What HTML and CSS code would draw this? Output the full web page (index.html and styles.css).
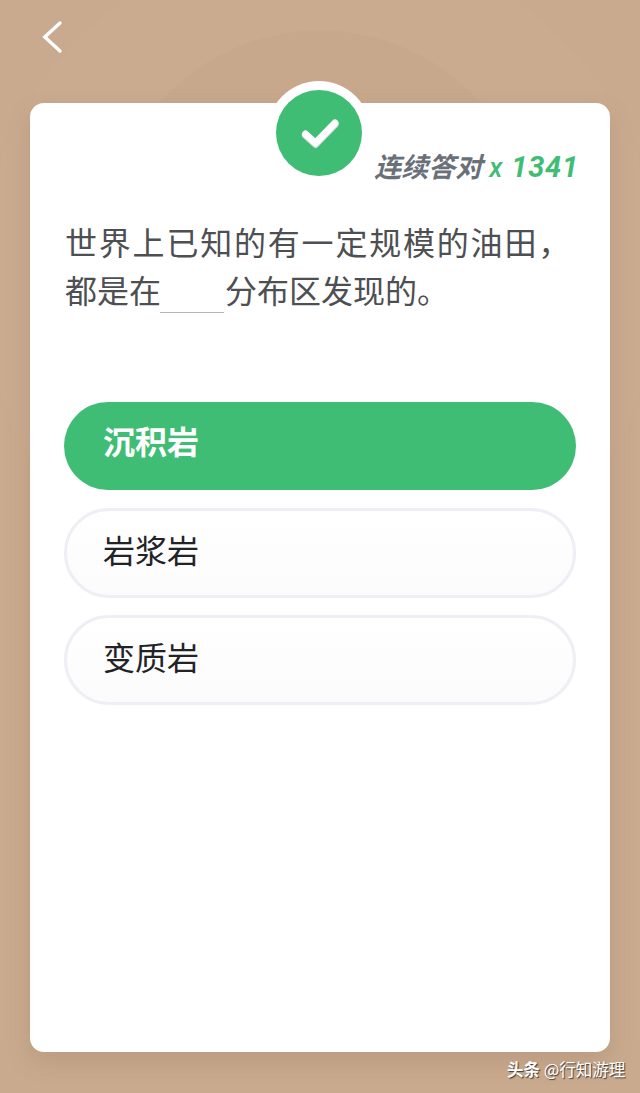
FILE: index.html
```html
<!DOCTYPE html>
<html lang="zh-CN">
<head>
<meta charset="utf-8">
<title>连续答对</title>
<link rel="stylesheet" href="styles.css">
</head>
<body>
<div class="page">
  <header class="topbar">
    <svg class="back" width="24" height="36" viewBox="0 0 24 36" aria-hidden="true"><path d="M19 4 L3.800 18 L19 32" fill="none" stroke="#ffffff" stroke-width="3.400" stroke-linecap="round" stroke-linejoin="miter"/></svg>
  </header>
  <main class="card">
    <div class="badge">
      <svg width="86" height="86" viewBox="0 0 86 86" aria-hidden="true">
        <circle cx="43" cy="43" r="43" fill="#3fbd75"/>
        <path d="M29.500 44 L39.500 53 L59 33" fill="none" stroke="#cfd8d2" stroke-width="7" stroke-linecap="round" stroke-linejoin="round" transform="translate(0 1.500)"/>
        <path d="M29.500 44 L39.500 53 L59 33" fill="none" stroke="#ffffff" stroke-width="7" stroke-linecap="round" stroke-linejoin="round"/>
      </svg>
    </div>
    <div class="streak"><span class="streak-label">连续答对</span> <span class="streak-count"><span class="streak-x">x</span> 1341</span></div>
    <div class="question">
      <p class="question-line question-line-wide">世界上已知的有一定规模的油田，</p>
      <p class="question-line">都是在<span class="blank"></span>分布区发现的。</p>
    </div>
    <div class="options">
      <div class="option option-correct">沉积岩</div>
      <div class="option">岩浆岩</div>
      <div class="option">变质岩</div>
    </div>
  </main>
  <footer class="watermark"><b>头条</b> @行知游理</footer>
</div>
</body>
</html>
```
FILE: styles.css
```css
* { box-sizing: border-box; }
html, body { margin: 0; padding: 0; }
body { font-family: "Noto Sans CJK SC", "Roboto", sans-serif; }
.page {
  position: relative;
  width: 640px;
  height: 1093px;
  overflow: hidden;
  padding: 0 30px;
  background-color: #c9aa8e;
  background-image:
    radial-gradient(circle 215px at 320px 245px, #c7a88c 0, #c7a88c 99.6%, rgba(199,168,140,0) 100%),
    radial-gradient(circle 340px at 320px 278px, #caab90 0, #caab90 99.7%, rgba(202,171,144,0) 100%);
  background-repeat: no-repeat;
}
.topbar { height: 103px; padding: 19px 0 0 11px; }
.back { display: block; }
.card {
  position: relative;
  height: 949px;
  background: #ffffff;
  border-radius: 14px;
  box-shadow: 0 10px 24px rgba(120, 90, 60, 0.18);
  padding: 45px 34px 0 34px;
}
.badge {
  position: absolute;
  left: 237px;
  top: -22px;
  width: 104px;
  height: 104px;
  border-radius: 50%;
  background: #ffffff;
  display: flex;
  align-items: center;
  justify-content: center;
}
.badge svg { display: block; }
.streak {
  display: flex;
  justify-content: flex-end;
  align-items: baseline;
  gap: 7px;
  height: 36px;
  margin-right: -3px;
  font-style: italic;
  font-weight: 700;
  line-height: 36px;
}
.streak-label { font-size: 27px; color: #6a7078; }
.streak-count { font-family: "Roboto", sans-serif; font-size: 29px; color: #3fbd75; letter-spacing: 0.800px; }
.streak-x { font-size: 27px; font-weight: 500; }
.question {
  margin: 33px 0 0 1px;
  font-size: 32px;
  line-height: 48px;
  color: #4d4f53;
  white-space: nowrap;
}
.question-line { margin: 0; }
.question-line-wide { letter-spacing: 1.800px; }
.blank {
  display: inline-block;
  width: 64px;
  height: 34px;
  vertical-align: -10px;
  margin: 0 1px 0 -1px;
  border-bottom: 1px solid #b5b5b5;
}
.options {
  display: flex;
  flex-direction: column;
  gap: 18px;
  margin-top: 89px;
}
.option {
  height: 90px;
  border-radius: 45px;
  border: 3px solid #eeeef5;
  background: linear-gradient(#ffffff, #fbfbfc);
  display: flex;
  align-items: center;
  padding: 0 0 8px 36px;
  font-size: 32px;
  color: #222326;
}
.option + .option + .option { margin-top: -1px; }
.option-correct {
  height: 88px;
  border: 0;
  padding: 0 0 12px 39px;
  background: #3fbd75;
  color: #ffffff;
  font-weight: 700;
}
.watermark {
  position: absolute;
  left: 507px;
  top: 1057px;
  font-size: 16.500px;
  line-height: 24px;
  color: #ffffff;
  white-space: nowrap;
  text-shadow: 1px 1px 1px rgba(30, 30, 30, 0.8);
}
.watermark b { font-weight: 700; }
```
